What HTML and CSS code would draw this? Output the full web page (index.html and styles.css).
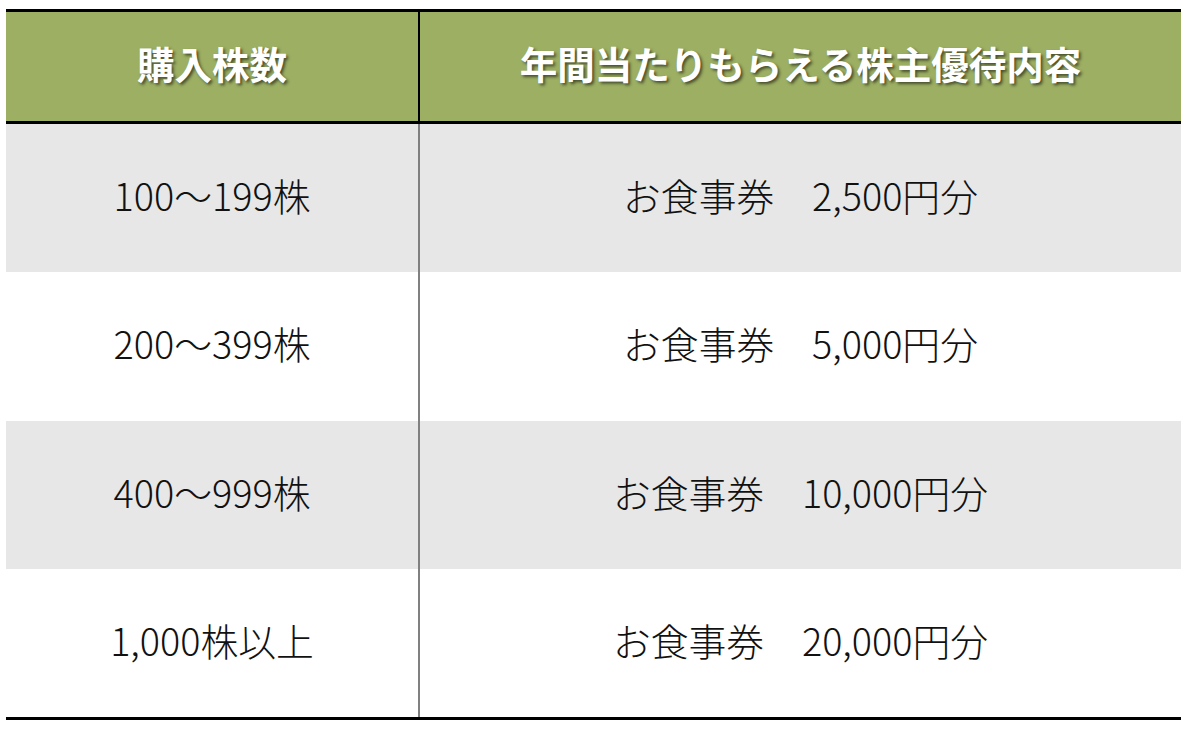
FILE: index.html
```html
<!DOCTYPE html>
<html lang="ja">
<head>
<meta charset="utf-8">
<link rel="stylesheet" href="styles.css">
</head>
<body>
<div class="page">
  <div class="table">
    <div class="row head">
      <div class="cell c1">購入株数</div>
      <div class="cell c2">年間当たりもらえる株主優待内容</div>
    </div>
    <div class="row body gray r1">
      <div class="cell c1">100～199株</div>
      <div class="cell c2">お食事券　2,500円分</div>
    </div>
    <div class="row body white r2">
      <div class="cell c1">200～399株</div>
      <div class="cell c2">お食事券　5,000円分</div>
    </div>
    <div class="row body gray r3">
      <div class="cell c1">400～999株</div>
      <div class="cell c2">お食事券　10,000円分</div>
    </div>
    <div class="row body white r4">
      <div class="cell c1">1,000株以上</div>
      <div class="cell c2">お食事券　20,000円分</div>
    </div>
  </div>
</div>
</body>
</html>
```
FILE: styles.css
```css
html, body {
  margin: 0;
  padding: 0;
  background: #ffffff;
}
.page {
  padding: 9px 0 0 6px;
}
.table {
  width: 1175px;
  font-family: "Noto Sans CJK JP", "Noto Sans", sans-serif;
  border-bottom: 3px solid #000;
}
.row {
  display: grid;
  grid-template-columns: 414px 761px;
}
.cell {
  display: flex;
  align-items: center;
  justify-content: center;
  white-space: pre;
  padding-bottom: 8px;
}
.head {
  background: #9caf62;
  border-top: 3px solid #000;
  border-bottom: 3px solid #000;
  height: 109px;
  color: #fff;
  font-weight: bold;
  font-size: 37.5px;
  text-shadow: 2px 2px 3px rgba(0,0,0,0.55);
}
.head .c1 { border-right: 2px solid #000; }
.body .c1 { border-right: 2px solid #808080; }
.body {
  font-size: 37.8px;
  font-weight: 300;
  color: #111;
}
.gray { background: #e7e7e7; }
.white { background: #ffffff; }
.r1 { height: 148px; }
.r2 { height: 149px; }
.r3 { height: 148px; }
.r4 { height: 148px; }
```
